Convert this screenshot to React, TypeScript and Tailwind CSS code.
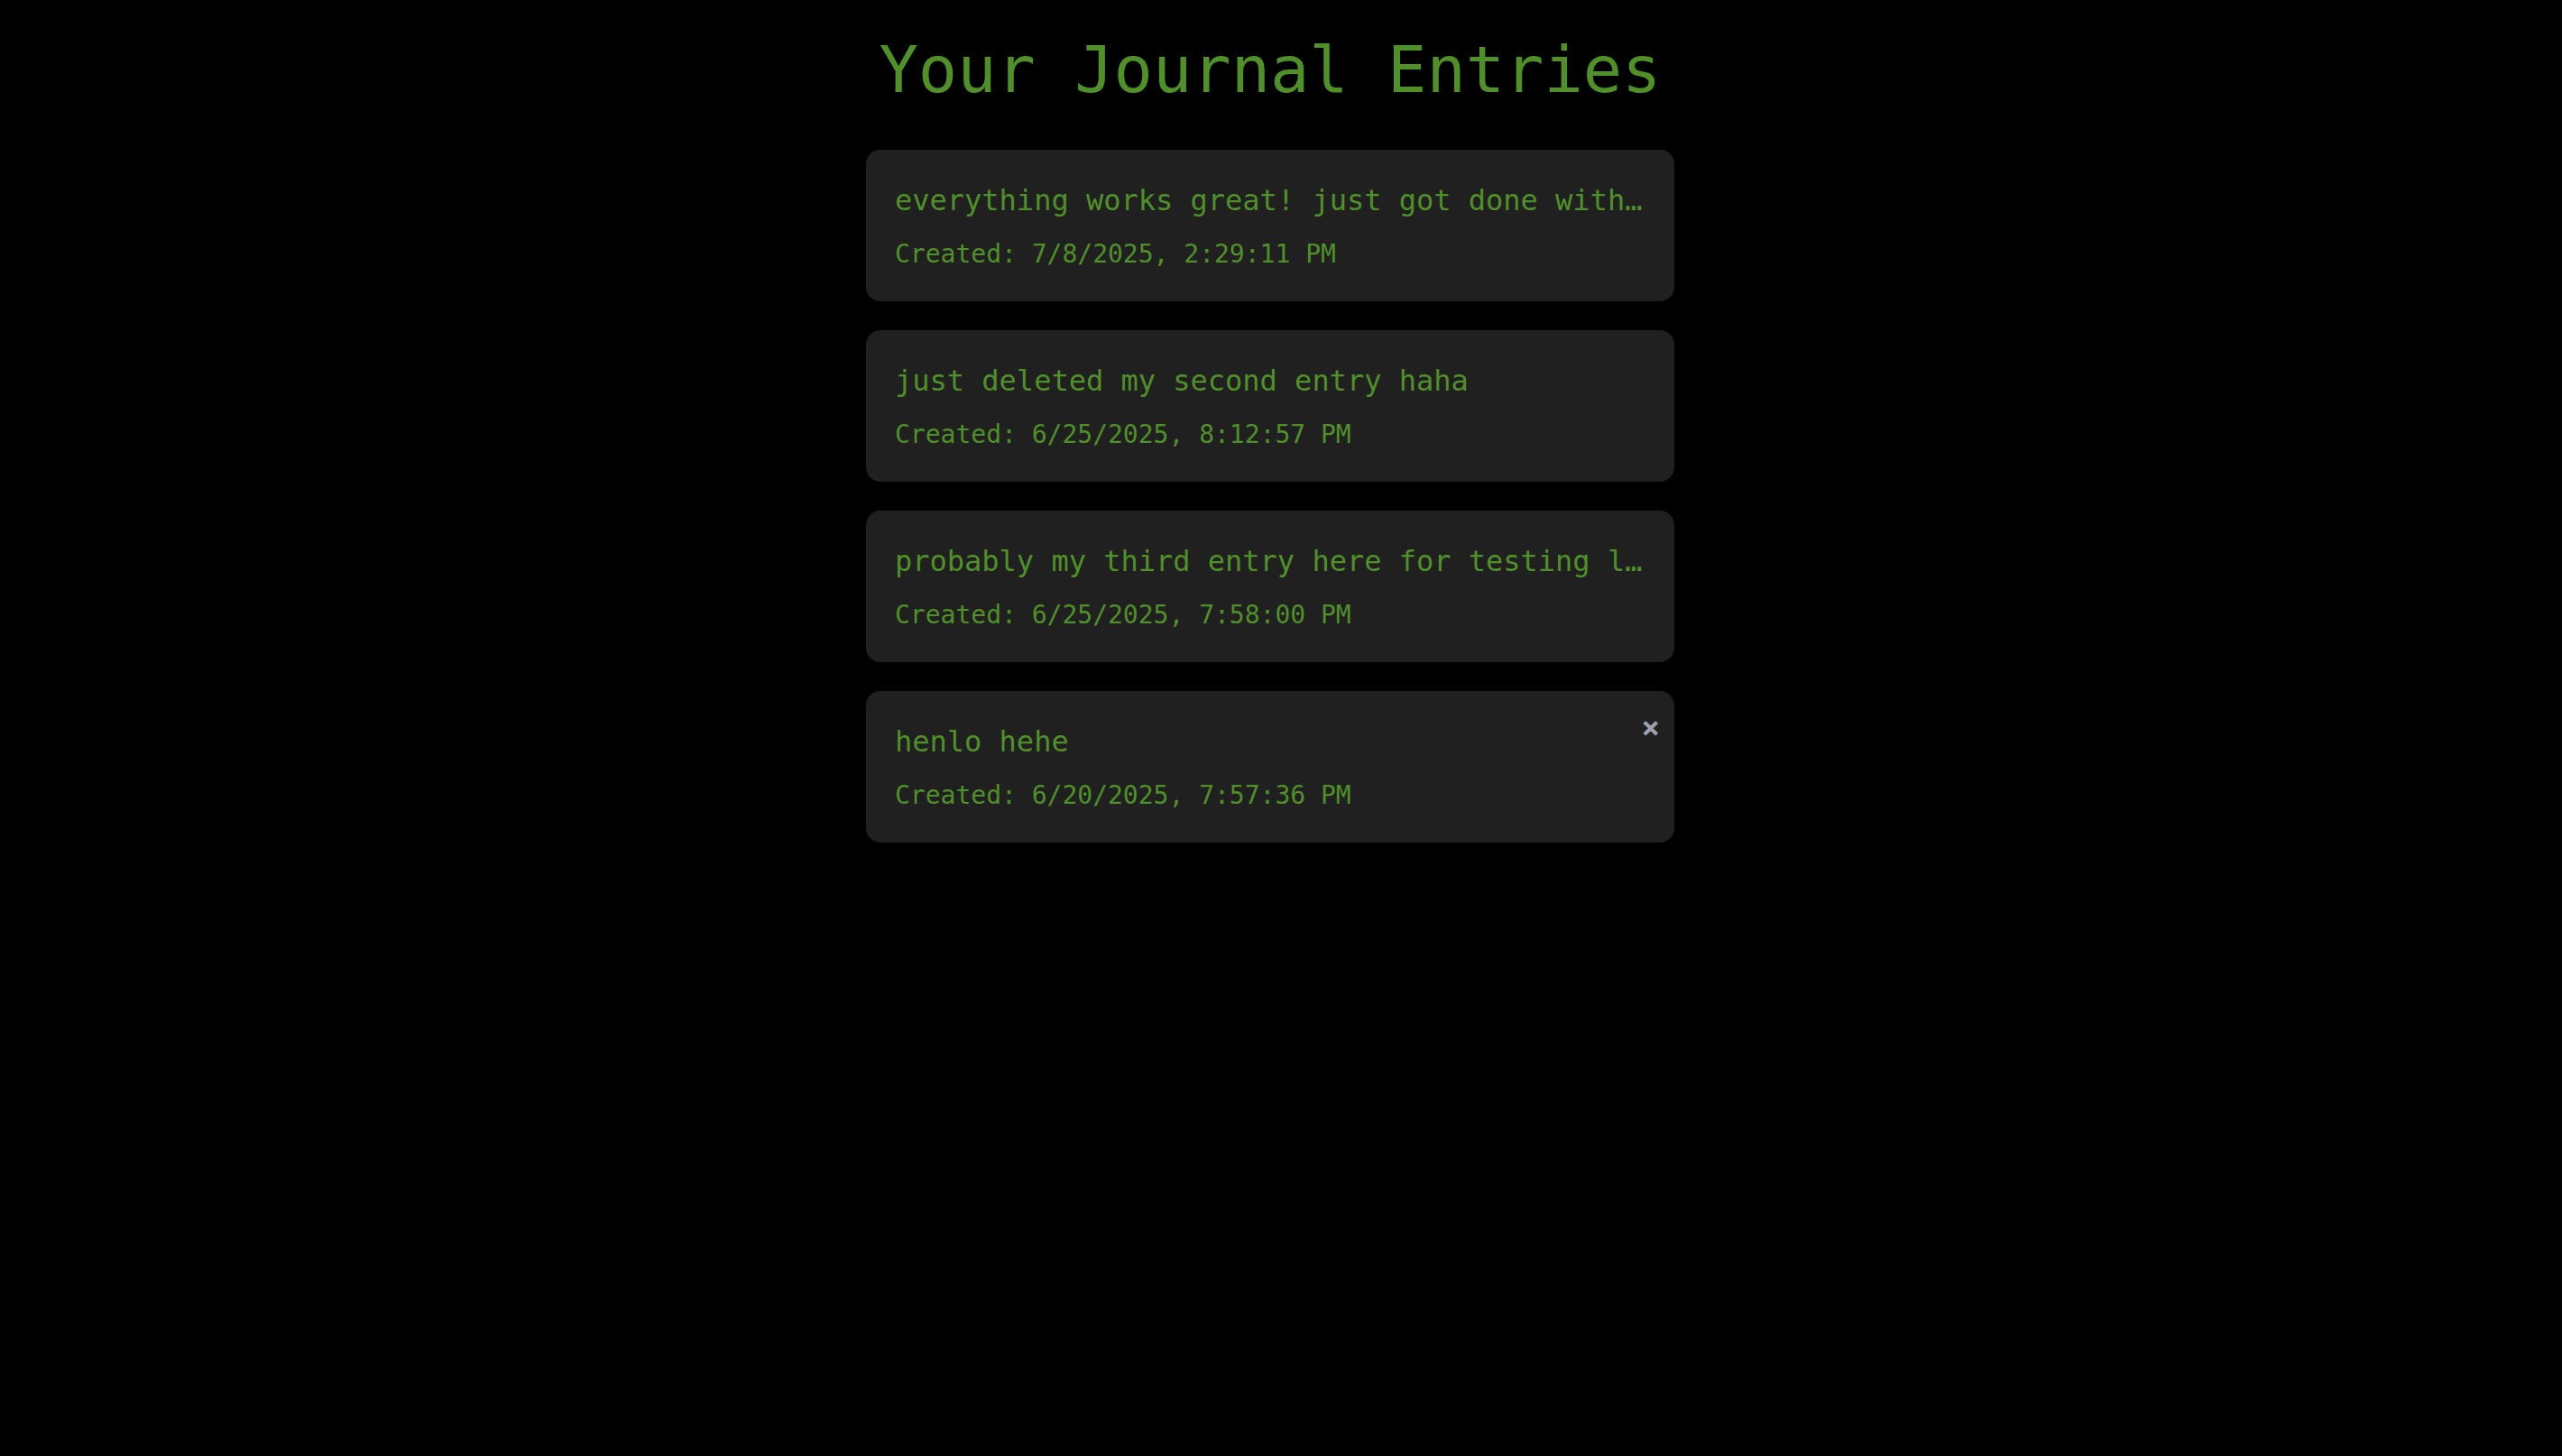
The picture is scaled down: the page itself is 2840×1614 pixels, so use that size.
interface JournalEntry {
  id: number;
  content: string;
  createdAt: string;
}

const entries: JournalEntry[] = [
  { id: 4, content: "everything works great! just got done with…", createdAt: "7/8/2025, 2:29:11 PM" },
  { id: 3, content: "just deleted my second entry haha", createdAt: "6/25/2025, 8:12:57 PM" },
  { id: 2, content: "probably my third entry here for testing l…", createdAt: "6/25/2025, 7:58:00 PM" },
  { id: 1, content: "henlo hehe", createdAt: "6/20/2025, 7:57:36 PM" },
];

const App = () => {
  const activeId = 1;

  return (
    <main className="min-h-screen bg-black pt-8 pr-6 font-['DejaVu_Sans_Mono',monospace] text-[#509028]">
      <div className="mx-auto max-w-[896px]">
        <h1 className="mb-11 text-center text-[72px] leading-[90px]">Your Journal Entries</h1>

        <ul className="flex flex-col gap-8">
          {entries.map((entry) => (
            <li key={entry.id} className="relative rounded-2xl bg-[#202020] px-8 pt-8 pb-7">
              <h2 className="truncate text-[32px] leading-[48px]">{entry.content}</h2>
              <p className="mt-3 text-[28px] leading-[48px]">Created: {entry.createdAt}</p>
              {entry.id === activeId && (
                <button type="button" aria-label="Delete entry" className="absolute top-6 right-4 text-[34px] leading-8 font-bold text-[#a0a1b0]">
                  ×
                </button>
              )}
            </li>
          ))}
        </ul>
      </div>
    </main>
  );
};

export default App;
